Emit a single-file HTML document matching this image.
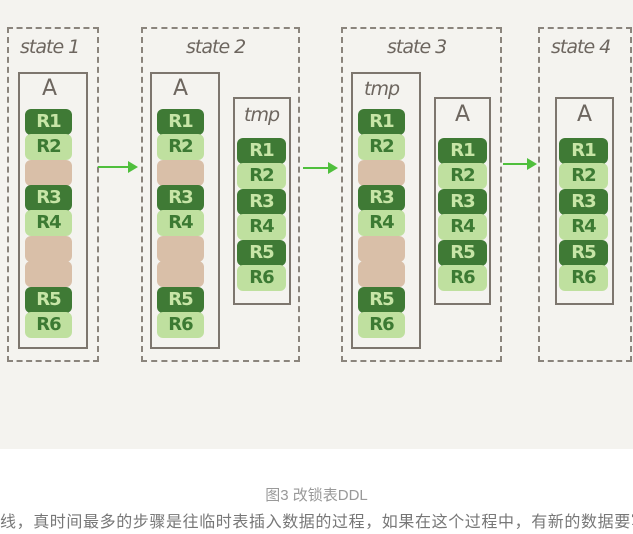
<!DOCTYPE html>
<html><head><meta charset="utf-8"><style>
body{margin:0;width:633px;height:522px;overflow:hidden;background:#fff;position:relative;font-family:"Liberation Sans","Noto Sans CJK SC",sans-serif}
#fig{position:absolute;left:0;top:0;width:633px;height:449px;background:#f4f3ef}
.d{position:absolute;border:2px dashed #8a847c;box-sizing:border-box}
.b{position:absolute;border:2px solid #7d766e;box-sizing:border-box}
.lbl{position:absolute;font-family:"DejaVu Sans",sans-serif;color:#6d665f;font-size:19px;font-style:italic;letter-spacing:-1px}
.t{position:absolute;font-family:"DejaVu Sans",sans-serif;color:#6d665f;font-size:22px}
.r{position:absolute;height:26px;border-radius:6px;box-sizing:border-box;text-align:center;font-family:"DejaVu Sans",sans-serif;font-size:18px;font-weight:bold;line-height:26px;letter-spacing:-1px}
.k{background:#3f7a35;color:#c7e5a6}
.l{background:#bfe09f;color:#3c7a33}
.g{background:#d9bfa8}
.ar{position:absolute;height:2px;background:#4fbf3c}
.ar:after{content:"";position:absolute;right:-2px;top:-5px;border-left:10px solid #4fbf3c;border-top:6px solid transparent;border-bottom:6px solid transparent}
</style></head><body>
<div id="fig">
<div class="d" style="left:7px;top:27px;width:92px;height:335px"></div>
<div class="lbl" style="left:20px;top:36px">state 1</div>
<div class="b" style="left:18px;top:72px;width:70px;height:277px"></div>
<div class="t" style="left:42px;top:76px">A</div>
<div class="r k" style="left:25px;top:109px;width:47px">R1</div>
<div class="r l" style="left:25px;top:134px;width:47px">R2</div>
<div class="r g" style="left:25px;top:160px;width:47px"></div>
<div class="r k" style="left:25px;top:185px;width:47px">R3</div>
<div class="r l" style="left:25px;top:210px;width:47px">R4</div>
<div class="r g" style="left:25px;top:236px;width:47px"></div>
<div class="r g" style="left:25px;top:261px;width:47px"></div>
<div class="r k" style="left:25px;top:287px;width:47px">R5</div>
<div class="r l" style="left:25px;top:312px;width:47px">R6</div>
<div class="ar" style="left:98px;top:166px;width:38px"></div>
<div class="d" style="left:141px;top:27px;width:159px;height:335px"></div>
<div class="lbl" style="left:186px;top:36px">state 2</div>
<div class="b" style="left:150px;top:72px;width:70px;height:277px"></div>
<div class="t" style="left:173px;top:76px">A</div>
<div class="r k" style="left:157px;top:109px;width:47px">R1</div>
<div class="r l" style="left:157px;top:134px;width:47px">R2</div>
<div class="r g" style="left:157px;top:160px;width:47px"></div>
<div class="r k" style="left:157px;top:185px;width:47px">R3</div>
<div class="r l" style="left:157px;top:210px;width:47px">R4</div>
<div class="r g" style="left:157px;top:236px;width:47px"></div>
<div class="r g" style="left:157px;top:261px;width:47px"></div>
<div class="r k" style="left:157px;top:287px;width:47px">R5</div>
<div class="r l" style="left:157px;top:312px;width:47px">R6</div>
<div class="b" style="left:233px;top:97px;width:58px;height:208px"></div>
<div class="lbl" style="left:244px;top:104px">tmp</div>
<div class="r k" style="left:237px;top:138px;width:49px">R1</div>
<div class="r l" style="left:237px;top:163px;width:49px">R2</div>
<div class="r k" style="left:237px;top:189px;width:49px">R3</div>
<div class="r l" style="left:237px;top:214px;width:49px">R4</div>
<div class="r k" style="left:237px;top:240px;width:49px">R5</div>
<div class="r l" style="left:237px;top:265px;width:49px">R6</div>
<div class="ar" style="left:303px;top:167px;width:33px"></div>
<div class="d" style="left:341px;top:27px;width:161px;height:335px"></div>
<div class="lbl" style="left:387px;top:36px">state 3</div>
<div class="b" style="left:351px;top:72px;width:70px;height:277px"></div>
<div class="lbl" style="left:364px;top:78px">tmp</div>
<div class="r k" style="left:358px;top:109px;width:47px">R1</div>
<div class="r l" style="left:358px;top:134px;width:47px">R2</div>
<div class="r g" style="left:358px;top:160px;width:47px"></div>
<div class="r k" style="left:358px;top:185px;width:47px">R3</div>
<div class="r l" style="left:358px;top:210px;width:47px">R4</div>
<div class="r g" style="left:358px;top:236px;width:47px"></div>
<div class="r g" style="left:358px;top:261px;width:47px"></div>
<div class="r k" style="left:358px;top:287px;width:47px">R5</div>
<div class="r l" style="left:358px;top:312px;width:47px">R6</div>
<div class="b" style="left:434px;top:97px;width:57px;height:208px"></div>
<div class="t" style="left:455px;top:102px">A</div>
<div class="r k" style="left:438px;top:138px;width:49px">R1</div>
<div class="r l" style="left:438px;top:163px;width:49px">R2</div>
<div class="r k" style="left:438px;top:189px;width:49px">R3</div>
<div class="r l" style="left:438px;top:214px;width:49px">R4</div>
<div class="r k" style="left:438px;top:240px;width:49px">R5</div>
<div class="r l" style="left:438px;top:265px;width:49px">R6</div>
<div class="ar" style="left:503px;top:163px;width:32px"></div>
<div class="d" style="left:538px;top:27px;width:94px;height:335px"></div>
<div class="lbl" style="left:551px;top:36px">state 4</div>
<div class="b" style="left:555px;top:97px;width:59px;height:208px"></div>
<div class="t" style="left:577px;top:102px">A</div>
<div class="r k" style="left:559px;top:138px;width:49px">R1</div>
<div class="r l" style="left:559px;top:163px;width:49px">R2</div>
<div class="r k" style="left:559px;top:189px;width:49px">R3</div>
<div class="r l" style="left:559px;top:214px;width:49px">R4</div>
<div class="r k" style="left:559px;top:240px;width:49px">R5</div>
<div class="r l" style="left:559px;top:265px;width:49px">R6</div>
</div>
<div style="position:absolute;left:0;width:633px;top:486px;text-align:center;color:#999;font-size:15px;line-height:20px">图3 改锁表DDL</div>
<div style="position:absolute;left:0;top:512px;white-space:nowrap;color:#777;font-size:16px;line-height:22px;letter-spacing:0.6px">线，真时间最多的步骤是往临时表插入数据的过程，如果在这个过程中，有新的数据要写入</div>
</body></html>
